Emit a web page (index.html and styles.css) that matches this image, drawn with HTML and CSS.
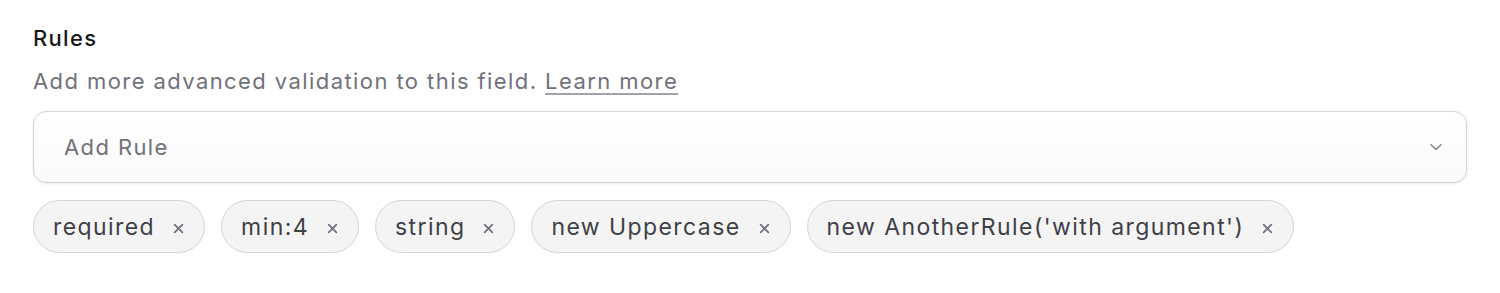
FILE: index.html
```html
<!DOCTYPE html>
<html>
<head>
<meta charset="utf-8">
<link rel="stylesheet" href="styles.css">
</head>
<body>
<div class="field">
  <div class="label">Rules</div>
  <div class="help">Add more advanced validation to this field. <a class="link" href="#">Learn more</a></div>
  <div class="select">
    <span class="placeholder">Add Rule</span>
    <svg class="chevron" width="18" height="18" viewBox="0 0 16 16"><path d="M3.5 6 L8 10.2 L12.5 6" fill="none" stroke="#8e8e96" stroke-width="1.5" stroke-linecap="round" stroke-linejoin="round"/></svg>
  </div>
  <div class="tags">
    <span class="tag"><span class="tag-text">required</span><svg class="x" viewBox="0 0 10 10"><path d="M1.5 1.5 L8.5 8.5 M8.5 1.5 L1.5 8.5" stroke="#71717a" stroke-width="1.6" stroke-linecap="round"/></svg></span>
    <span class="tag"><span class="tag-text">min:4</span><svg class="x" viewBox="0 0 10 10"><path d="M1.5 1.5 L8.5 8.5 M8.5 1.5 L1.5 8.5" stroke="#71717a" stroke-width="1.6" stroke-linecap="round"/></svg></span>
    <span class="tag"><span class="tag-text">string</span><svg class="x" viewBox="0 0 10 10"><path d="M1.5 1.5 L8.5 8.5 M8.5 1.5 L1.5 8.5" stroke="#71717a" stroke-width="1.6" stroke-linecap="round"/></svg></span>
    <span class="tag"><span class="tag-text">new Uppercase</span><svg class="x" viewBox="0 0 10 10"><path d="M1.5 1.5 L8.5 8.5 M8.5 1.5 L1.5 8.5" stroke="#71717a" stroke-width="1.6" stroke-linecap="round"/></svg></span>
    <span class="tag"><span class="tag-text">new AnotherRule('with argument')</span><svg class="x" viewBox="0 0 10 10"><path d="M1.5 1.5 L8.5 8.5 M8.5 1.5 L1.5 8.5" stroke="#71717a" stroke-width="1.6" stroke-linecap="round"/></svg></span>
  </div>
</div>
</body>
</html>
```
FILE: styles.css
```css
html, body {
  margin: 0;
  padding: 0;
  background: #ffffff;
}
body {
  font-family: Inter, "Liberation Sans", sans-serif;
  color: #18181b;
}
.field {
  padding: 23px 33px 0 33px;
  display: flex;
  flex-direction: column;
}
.label {
  font-size: 22px;
  font-weight: 500;
  letter-spacing: 1.3px;
  line-height: 30px;
  color: #18181b;
}
.help {
  margin-top: 13px;
  font-size: 22px;
  letter-spacing: 1.42px;
  line-height: 30px;
  color: #71717a;
}
.link {
  color: #71717a;
  text-decoration: underline;
  text-underline-offset: 4px;
  text-decoration-thickness: 2px;
  text-decoration-color: #a1a1aa;
}
.select {
  margin-top: 15px;
  height: 72px;
  box-sizing: border-box;
  border: 1.5px solid #d4d4d8;
  border-radius: 13px;
  background: linear-gradient(#ffffff, #fafafb);
  box-shadow: 0 1px 3px rgba(0,0,0,0.08);
  display: flex;
  align-items: center;
  justify-content: space-between;
  padding: 0 21px 0 30px;
}
.placeholder {
  font-size: 22px;
  letter-spacing: 1.4px;
  color: #71717a;
}
.chevron {
  width: 18px;
  height: 18px;
}
.tags {
  margin-top: 17px;
  display: flex;
  gap: 16px;
}
.tag {
  height: 53px;
  box-sizing: border-box;
  border: 1.5px solid #d4d4d8;
  border-radius: 27px;
  background: #f4f4f5;
  display: inline-flex;
  align-items: center;
  padding: 0 20px 0 19px;
  font-size: 23px;
  color: #3f3f46;
}
.tag-text {
  letter-spacing: 1.42px;
}
.x {
  margin-left: 18px;
  width: 11px;
  height: 11px;
  margin-top: 3px;
}
```
